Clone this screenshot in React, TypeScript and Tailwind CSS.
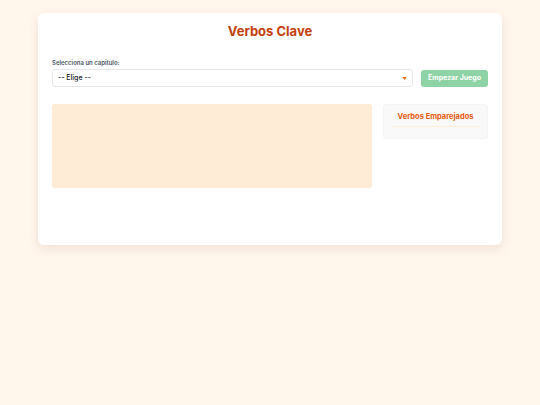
export default function App() {
  return (
    <div
      className="min-h-[405px] bg-[#fff6ec] px-[38px] pt-[13px]"
      style={{ fontFamily: 'Inter, "Noto Sans", sans-serif' }}
    >
      <div className="flex h-[232px] flex-col rounded-[6px] bg-white px-[14px] pt-[8px] shadow-[0_4px_10px_rgba(180,140,110,0.18)]">
        {/* Title */}
        <h1 className="text-center text-[13px] font-bold leading-[20px] text-[#c2410c]">
          Verbos Clave
        </h1>

        {/* Chapter select */}
        <div className="mt-[18px] flex items-end gap-[8px]">
          <div className="flex flex-1 flex-col">
            <label className="mb-[2px] text-[6px] font-semibold leading-[8px] text-gray-600">
              Selecciona un capítulo:
            </label>
            <div className="flex h-[18px] items-center justify-between rounded-[3px] border border-gray-200 bg-white px-[5px]">
              <span className="text-[7px] font-medium text-gray-900">-- Elige --</span>
              <svg viewBox="0 0 6 4" className="h-[3px] w-[5px] text-orange-500">
                <path d="M0 0h6L3 4z" fill="currentColor" />
              </svg>
            </div>
          </div>
          <button className="h-[17px] w-[67px] shrink-0 rounded-[3px] bg-[#8ed3a6] text-[7px] font-bold text-white">
            Empezar Juego
          </button>
        </div>

        {/* Game area */}
        <div className="mt-[17px] flex items-start gap-[11px]">
          <div className="h-[84px] flex-1 rounded-[3px] bg-[#ffecd6]" />
          <div className="w-[105px] rounded-[3px] border border-gray-100 bg-[#f9f9f9] px-[7px] pt-[7px] pb-[11px]">
            <h2 className="border-b border-orange-100 pb-[4px] text-center text-[7.5px] font-bold leading-[10px] text-[#ea580c]">
              Verbos Emparejados
            </h2>
          </div>
        </div>
      </div>
    </div>
  );
}
